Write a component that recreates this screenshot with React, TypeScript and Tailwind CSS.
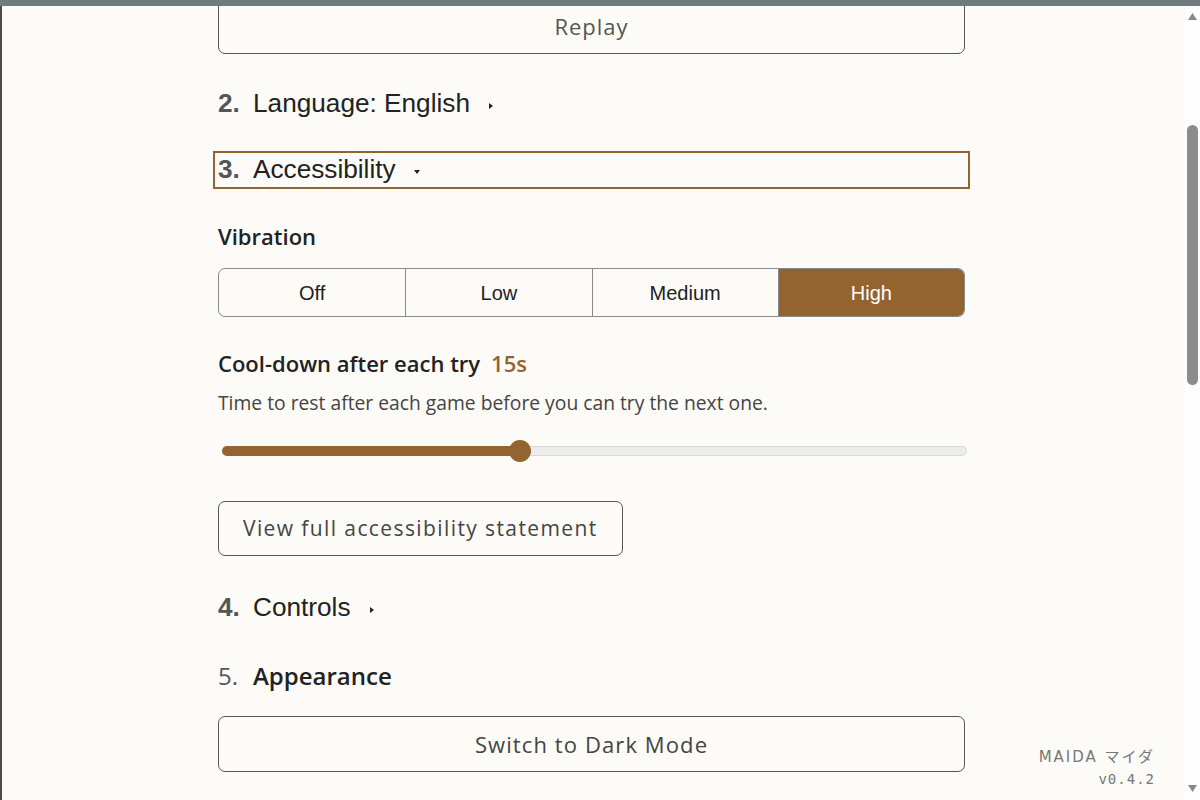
import React from 'react';

const sans = "font-['Open_Sans',sans-serif]";
const arial = "font-['Liberation_Sans',Arial,sans-serif]";

function Caret({ open }: { open?: boolean }) {
  return (
    <svg width="8" height="8" viewBox="0 0 8 8" className="ml-[17px] mt-[4px]">
      {open ? <path d="M1 2 L7 2 L4 6 Z" fill="#222" /> : <path d="M2 1 L6 4 L2 7 Z" fill="#222" />}
    </svg>
  );
}

function Summary({ num, title, open, focused }: { num: string; title: string; open?: boolean; focused?: boolean }) {
  return (
    <div
      className={`flex items-center h-[28px] ${arial} text-[26.2px] text-[#222] ${
        focused ? 'outline-2 outline-[#94632f] outline-offset-[3px]' : ''
      }`}
    >
      <span className="font-bold text-[#555] w-[35px]">{num}</span>
      <span>{title}</span>
      <Caret open={open} />
    </div>
  );
}

const levels = ['Off', 'Low', 'Medium', 'High'];

export default function App() {
  const selected = 'High';
  const pct = 40;

  return (
    <div className="h-screen flex flex-col bg-[#fcfbf7] overflow-hidden">
      <div className="h-[6px] bg-[#6e7c81] shrink-0" />
      <div className="flex-1 flex min-h-0">
        <div className="w-[2px] bg-[#4a4a4a] shrink-0" />
        <main className="flex-1 relative overflow-hidden pr-[4px]">
          <div className="w-[747px] mx-auto flex flex-col -mt-[7px]">
            <button className={`h-[55px] w-full border border-[#555] rounded-[7px] text-[22px] text-[#555] tracking-[1px] ${sans}`}>
              Replay
            </button>

            <div className="mt-[36px]">
              <Summary num="2." title="Language: English" />
            </div>

            <div className="mt-[38px]">
              <Summary num="3." title="Accessibility" open focused />
            </div>

            <h3 className={`mt-[37px] text-[22px] font-semibold text-[#222] leading-[30px] ${sans}`}>Vibration</h3>

            <div className={`mt-[17px] grid grid-cols-4 h-[49px] border border-[#8a8a8a] rounded-[7px] overflow-hidden ${arial} text-[20px]`}>
              {levels.map((l, i) => (
                <div
                  key={l}
                  className={`flex items-center justify-center ${i > 0 ? 'border-l border-[#8a8a8a]' : ''} ${
                    l === selected ? 'bg-[#936330] text-white' : 'text-[#222]'
                  }`}
                >
                  {l}
                </div>
              ))}
            </div>

            <div className={`mt-[31px] flex items-baseline leading-[30px] text-[22px] font-semibold ${sans}`}>
              <span className="text-[#222]">Cool-down after each try</span>
              <span className="ml-[11px] text-[#936330]">15s</span>
            </div>

            <p className={`mt-[12px] text-[19.3px] leading-[26px] text-[#444] ${sans}`}>
              Time to rest after each game before you can try the next one.
            </p>

            <div className="mt-[30px] ml-[4px] w-[745px] h-[10px] relative rounded-full bg-[#ececec] border border-[#d8d8d8]">
              <div className="absolute -left-px -top-px h-[10px] rounded-full bg-[#936330]" style={{ width: `${pct}%` }} />
              <div
                className="absolute top-1/2 -translate-x-1/2 -translate-y-1/2 w-[22px] h-[22px] rounded-full bg-[#936330]"
                style={{ left: `${pct}%` }}
              />
            </div>

            <button
              className={`mt-[45px] self-start h-[55px] px-[24px] border border-[#555] rounded-[7px] text-[21px] text-[#444] tracking-[1.4px] ${sans}`}
            >
              View full accessibility statement
            </button>

            <div className="mt-[38px]">
              <Summary num="4." title="Controls" />
            </div>

            <div className={`mt-[39px] flex items-center h-[30px] text-[24px] ${sans}`}>
              <span className="text-[#555] w-[35px]">5.</span>
              <span className="font-semibold text-[#222]">Appearance</span>
            </div>

            <button className={`mt-[25px] h-[56px] w-full border border-[#555] rounded-[7px] text-[22px] text-[#444] tracking-[1.1px] ${sans}`}>
              Switch to Dark Mode
            </button>
          </div>

          <div className="absolute right-[30px] bottom-[10px] flex flex-col items-end text-[#777] text-[15px] leading-[22px]">
            <span className="font-['DejaVu_Sans','Noto_Sans_CJK_JP',sans-serif] tracking-[2px]">MAIDA マイダ</span>
            <span className="font-['DejaVu_Sans_Mono',monospace] text-[14px] tracking-[1px]">v0.4.2</span>
          </div>
        </main>
        <div className="w-[15px] shrink-0 bg-[#fdfdfd] flex flex-col items-center">
          <svg width="9" height="7" viewBox="0 0 9 7" className="mt-[7px]">
            <path d="M4.5 0 L9 7 L0 7 Z" fill="#888" />
          </svg>
          <div className="mt-[105px] w-[11px] h-[260px] rounded-full bg-[#8c8c8c]" />
          <div className="flex-1" />
          <svg width="9" height="7" viewBox="0 0 9 7" className="mb-[8px]">
            <path d="M0 0 L9 0 L4.5 7 Z" fill="#888" />
          </svg>
        </div>
      </div>
    </div>
  );
}
